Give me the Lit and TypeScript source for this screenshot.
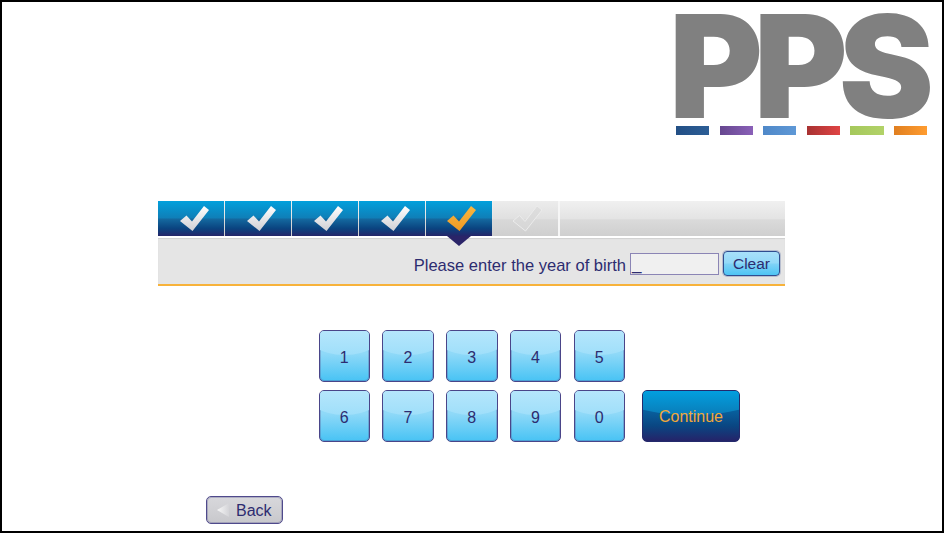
import { LitElement, html, css, svg } from "lit";
import { customElement } from "lit/decorators.js";

const check = (id: string, a: string, b: string, edge = "none") => svg`
<svg class="check" width="66" height="35" viewBox="0 0 66 35">
  <defs><linearGradient id=${id} x1="0" y1="0" x2="0" y2="1"><stop offset="0" stop-color=${a}/><stop offset="1" stop-color=${b}/></linearGradient></defs>
  <path d="M22 20 L28.5 14.5 L34 20.5 L46 5 L51 9 L34.5 30 Z" fill="url(#${id})" stroke=${edge} stroke-linejoin="round"/>
</svg>`;

@customElement("app-root")
export class AppRoot extends LitElement {
  static styles = css`
    :host { display: block; font-family: "Liberation Sans", Arial, sans-serif; color: #2d2c70; }
    .frame { box-sizing: border-box; width: 944px; height: 533px; border: 2px solid #000; background: #fff; display: flex; flex-direction: column; overflow: hidden; }
    .logo { align-self: flex-end; margin: 8px 11px 0 0; width: 256px; height: 126px; display: flex; flex-direction: column; }
    .pps { font-family: Inter, "Liberation Sans", sans-serif; font-weight: 900; font-size: 143px; line-height: 112px; height: 112px; width: max-content; letter-spacing: -9px; margin-left: -6px; color: #808080; white-space: nowrap; }
    .bars { display: flex; gap: 10.3px; margin-top: 4px; padding-left: 1px; }
    .bars i { display: block; width: 33.3px; height: 9px; }
    .panel { width: 627px; margin: 65px 0 0 156px; display: flex; flex-direction: column; }
    .steps { display: flex; height: 35px; background: linear-gradient(#f0f0f0, #e4e4e4 50%, #dadada 54%, #cfcfcf); }
    .step { position: relative; width: 66px; height: 35px; margin-right: 1px; flex: none; background: linear-gradient(#02a0dc 0%, #0f7fb8 48%, #14689f 52%, #0a4480 78%, #252569 100%); }
    .step.off { background: linear-gradient(#ececec, #e0e0e0 50%, #d8d8d8 54%, #cfcfcf); margin: 0 0 0 1px; width: 65px; border-right: 2px solid #f6f6f6; }
    .step.cur { margin-right: 0; }
    .check { display: block; }
    .step.cur .check { margin-left: -1px; }
    .step.off .check { margin-left: -2px; }
    .pointer { position: absolute; left: 21px; top: 35px; width: 0; height: 0; border-left: 12px solid transparent; border-right: 12px solid transparent; border-top: 10px solid #2a2468; z-index: 1; }
    .row { box-sizing: border-box; height: 48px; margin-top: 2px; background: #e5e5e5; border-bottom: 2px solid #f7b23a; box-shadow: inset 0 1px 1px #d0d0d0; display: flex; align-items: center; justify-content: flex-end; padding: 4px 5px 0 0; }
    .prompt { font-size: 16.55px; white-space: nowrap; margin-right: 4px; padding-top: 6px; }
    .field { box-sizing: border-box; width: 89px; height: 22px; border: 1px solid #8b85b5; background: #f0f0f0; font-size: 17px; line-height: 22px; padding-left: 1px; margin-right: 4px; margin-top: 2px; overflow: hidden; }
    .clear { box-sizing: border-box; width: 57px; height: 25px; border: 1px solid #2f4d8f; box-shadow: 0 0 0 1px rgba(47, 77, 143, 0.25); border-radius: 4px; background: linear-gradient(#a8e0fa, #93d9f8 48%, #7fd2f6 52%, #4dc4f4); font-size: 15.5px; display: flex; align-items: center; justify-content: center; padding-top: 2px; }
    .pad { display: flex; margin: 44px 0 0 316.5px; align-items: flex-end; }
    .keys { display: grid; grid-template-columns: repeat(5, 51.5px); grid-auto-rows: 52px; column-gap: 12.25px; row-gap: 8px; }
    .key { box-sizing: border-box; position: relative; overflow: hidden; border: 1px solid #4a4589; border-radius: 5px; outline: 1px solid rgba(80, 75, 140, 0.3); outline-offset: -2px; background: linear-gradient(#8fd9f8 45%, #48c3f4); font-size: 16px; display: flex; align-items: center; justify-content: center; padding-top: 3px; }
    .key::before { content: ""; position: absolute; left: -40%; width: 180%; top: -38px; height: 62px; border-radius: 50%; background: linear-gradient(#b6e6fc 60%, #9fdffa); }
    .key span { position: relative; }
    .continue { box-sizing: border-box; position: relative; overflow: hidden; width: 98px; height: 52px; margin-left: 17px; border: 1px solid #242a6c; border-radius: 5px; background: linear-gradient(#085e9c 42%, #0a4682 70%, #252369 100%); color: #f2a83a; font-size: 16px; display: flex; align-items: center; justify-content: center; padding-top: 2px; }
    .continue::before { content: ""; position: absolute; left: -40%; width: 180%; top: -38px; height: 62px; border-radius: 50%; background: linear-gradient(#02a0e0 60%, #0a7cb8); }
    .continue span { position: relative; }
    .back { box-sizing: border-box; width: 77px; height: 28px; margin: 54px 0 0 204px; border: 1px solid #4f4a8c; outline: 1px solid rgba(80, 75, 140, 0.3); outline-offset: -2px; border-radius: 5px; background: linear-gradient(#d8d8dc, #c8c8cc); font-size: 16px; display: flex; align-items: center; padding: 2px 0 0 10px; gap: 7px; }
    .back i { display: block; width: 12px; height: 14px; margin-top: -2px; clip-path: polygon(100% 0, 100% 100%, 0 50%); background: linear-gradient(90deg, #f8f8f8, #d4d4d8); }
  `;

  render() {
    const bars = ["linear-gradient(90deg,#234f85,#2c5e96)", "linear-gradient(90deg,#66478f,#8a60b8)", "linear-gradient(90deg,#4f88c8,#5e98d6)", "linear-gradient(90deg,#a83232,#e04444)", "linear-gradient(90deg,#a5c85c,#b2d268)", "linear-gradient(90deg,#e07f20,#ff9c30)"];
    const row = (ks: string[]) => ks.map((k) => html`<div class="key"><span>${k}</span></div>`);
    return html`
      <div class="frame">
        <div class="logo">
          <div class="pps">PPS</div>
          <div class="bars">${bars.map((b) => html`<i style="background:${b}"></i>`)}</div>
        </div>
        <div class="panel">
          <div class="steps">
            ${[0, 1, 2, 3].map((i) => html`<div class="step">${check("c" + i, "#ffffff", "#cfcfd4")}</div>`)}
            <div class="step cur">${check("c4", "#f9b63f", "#ee9a24")}<div class="pointer"></div></div>
            <div class="step off">${check("c5", "#dedede", "#d6d6d6", "#ececec")}</div>
          </div>
          <div class="row">
            <div class="prompt">Please enter the year of birth</div>
            <div class="field">_</div>
            <div class="clear">Clear</div>
          </div>
        </div>
        <div class="pad">
          <div class="keys">${row(["1", "2", "3", "4", "5", "6", "7", "8", "9", "0"])}</div>
          <div class="continue"><span>Continue</span></div>
        </div>
        <div class="back"><i></i><span>Back</span></div>
      </div>
    `;
  }
}
